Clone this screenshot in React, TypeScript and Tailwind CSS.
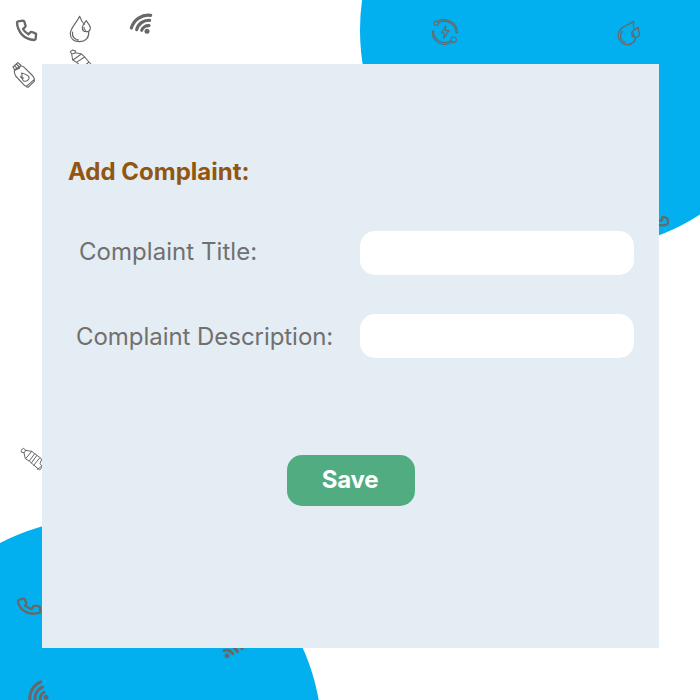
import type { ReactNode } from "react";

type IconProps = { className: string; viewBox: string; width?: number; children: ReactNode };

function Icon({ className, viewBox, width = 2, children }: IconProps) {
  return (
    <svg
      className={`absolute ${className}`}
      viewBox={viewBox}
      fill="none"
      stroke="#686868"
      strokeWidth={width}
      strokeLinecap="round"
      strokeLinejoin="round"
    >
      {children}
    </svg>
  );
}

function Backdrop() {
  return (
    <div className="absolute inset-0 overflow-hidden" aria-hidden="true">
      <div className="absolute -top-[190px] left-[360px] size-[440px] rounded-full bg-[#02b0f0]" />
      <div className="absolute top-[518px] -left-[118px] size-[440px] rounded-full bg-[#02b0f0]" />

      <Icon className="left-[15px] top-[18px] size-[24px]" viewBox="45 54 72 72" width={7}>
        <path d="M54 64L69 62Q72 62 73 65L77 78Q77 81 69 87Q73 95 85 103L91 97Q93 95 96 96L106 100Q109 101 108 104L107 117Q106 120 103 120Q80 119 66 104Q52 88 51 68Q51 65 54 64Z" />
      </Icon>
      <Icon className="left-[69px] top-[15px] size-[28px]" viewBox="207 45 84 84" width={3.6}>
        <path d="M239 49C228 72 211 83 211 102C211 117 223 125 238 125C257 125 268 112 266 96M239 49C243 60 247 67 253 73M259 62C252 72 247 76 247 83C247 91 252 95 259 95C266 95 271 90 271 83C271 76 264 71 259 62ZM218 96C216 107 220 114 228 118M231 119L235 120M252 82Q251 88 256 91" />
      </Icon>
      <Icon className="left-[129px] top-[12px] h-[24px] w-[26px]" viewBox="57 36 78 72" width={9.5}>
        <path d="M64 84A53 53 0 0 1 122 46M80 89A37 37 0 0 1 119 61M95 91A21 21 0 0 1 117 77" />
        <circle cx="111" cy="94" r="7.5" fill="#686868" stroke="none" />
      </Icon>
      <Icon className="left-[69px] top-[48px] size-[28px]" viewBox="207 144 84 84" width={3.2}>
        <path d="M211 155L218 150L227 153L224 160L215 162ZM226 158L243 161L253 170L267 186L285 205L267 219L248 203L231 188L218 180L215 162M244 162L219 180M254 171L229 187M267 186L247 202" />
      </Icon>
      <Icon className="left-[12px] top-[61px] size-[28px]" viewBox="36 183 84 84" width={3.4}>
        <path d="M39 201L53 188L62 195L58 205L45 211ZM44 197L51 205M49 192L58 201M43 210L59 200Q65 196 70 200L93 222Q103 232 103 238L82 257Q77 261 71 254L47 228Q42 220 43 210ZM103 239L103 244L84 262L79 260M65 219C68 230 63 237 70 242C79 247 89 240 87 231C85 224 76 222 65 219ZM62 229Q63 236 71 234" />
      </Icon>

      <Icon className="left-[431px] top-[18px] size-[28px]" viewBox="33 30 84 84" width={3.4}>
        <path d="M54 39Q72 30 91 40Q113 51 112 74H108Q108 54 91 45Q72 34 57 44M37 69Q36 94 57 105Q77 114 96 103M41 69Q41 90 58 100Q75 108 92 98M37 69H41M77 54L64 75H73L71 91L87 68H76Z" />
        <circle cx="49" cy="46" r="6.5" />
        <circle cx="101" cy="95" r="8" />
      </Icon>
      <Icon className="left-[616px] top-[19px] size-[28px]" viewBox="36 33 84 84" width={3.8}>
        <path d="M89 40C76 51 57 53 47 67C37 83 46 106 65 109C80 112 94 103 95 89M89 40C88 48 88 57 90 64M103 58C95 65 83 66 83 76C83 83 88 88 95 88C103 88 107 82 106 75C105 69 102 65 103 58ZM54 70Q44 87 56 98M59 101L62 103M88 75Q86 80 91 83" />
      </Icon>
      <Icon className="left-[650px] top-[211px] size-[20px]" viewBox="30 63 60 60" width={6.5}>
        <path d="M50 91L65 92Q68 90 66 83Q66 81 69 81L78 83Q82 85 83 88L84 98Q84 102 80 104L68 106L50 105" />
      </Icon>
      <Icon className="left-[19px] top-[447px] h-[25px] w-[30px]" viewBox="57 51 90 75" width={3}>
        <path d="M64 60L70 55L77 60L73 68L66 67ZM77 61L95 64L104 71L119 82L137 99L119 120L101 105L89 94L76 86L72 69M95 64L77 86M104 71L88 93M119 84L101 106M110 77L94 99M125 88L120 101L126 108L112 118" />
      </Icon>
      <Icon className="left-[16px] top-[595px] h-[22px] w-[28px]" viewBox="48 30 84 66" width={7}>
        <path d="M55 45L69 41Q72 40 74 43L79 54Q80 57 75 62Q84 69 95 72L101 63Q103 61 106 62L117 64Q120 65 120 68L121 79Q121 82 118 83Q95 91 74 79Q58 68 54 50Q53 46 55 45Z" />
      </Icon>
      <Icon className="left-[27px] top-[680px] size-[24px]" viewBox="81 285 72 72" width={9.5}>
        <path d="M122 291A53 53 0 0 0 91 353M127 306A37 37 0 0 0 106 348M132 322A21 21 0 0 0 122 348" />
        <circle cx="138" cy="337" r="7.5" fill="#686868" stroke="none" />
      </Icon>
      <Icon className="left-[221px] top-[638px] h-[24px] w-[26px]" viewBox="33 24 78 72" width={9.5}>
        <path d="M42 62Q58 56 68 71M43 46Q67 39 82 64M44 30Q79 22 96 56" />
        <circle cx="51" cy="77" r="7.5" fill="#686868" stroke="none" />
      </Icon>
    </div>
  );
}

export default function App() {
  return (
    <main className="relative flex h-[700px] w-[700px] items-start overflow-hidden bg-white pt-16 pl-[42px] font-['Inter',sans-serif]">
      <Backdrop />
      <form
        className="relative flex h-[584px] w-[617px] flex-col bg-[#e4edf3] pt-[92px] pr-[25px] pl-[26px] text-2xl text-[#707070]"
        onSubmit={(event) => event.preventDefault()}
      >
        <h1 className="h-[75px] leading-8 font-bold text-[#935610]">Add Complaint:</h1>
        <div className="flex flex-col gap-[39px]">
          <div className="flex h-11 items-center justify-between pl-[11px]">
            <label htmlFor="title" className="pb-0.5 tracking-[0.002em] whitespace-nowrap">Complaint Title:</label>
            <input id="title" className="h-11 w-[274px] rounded-[15px] bg-white px-4 outline-none" />
          </div>
          <div className="flex h-11 items-center justify-between pl-[8px]">
            <label htmlFor="description" className="pt-0.5 tracking-[-0.002em] whitespace-nowrap">Complaint Description:</label>
            <input id="description" className="h-11 w-[274px] rounded-[15px] bg-white px-4 outline-none" />
          </div>
        </div>
        <button className="mt-[97px] ml-[219px] h-[51px] w-32 rounded-[15px] bg-[#52ac82] pr-0.5 pb-px font-bold tracking-[-0.01em] text-white">
          Save
        </button>
      </form>
    </main>
  );
}
